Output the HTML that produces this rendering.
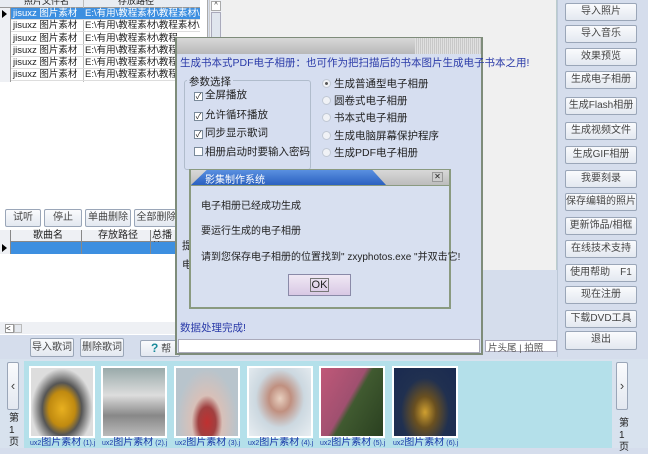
<!DOCTYPE html>
<html><head><meta charset="utf-8"><style>
*{margin:0;padding:0;box-sizing:border-box}
body{width:648px;height:448px;overflow:hidden;background:#d5ddec;font-family:"Liberation Sans","Noto Sans CJK SC",sans-serif;font-size:10px;color:#222;position:relative}
.a{position:absolute}
.btn{position:absolute;background:linear-gradient(#fafbfd,#e3e8f0);border:1px solid #9aa6b8;border-radius:2px;text-align:center;color:#444;font-size:10px}
.rb{left:565px;width:72px;height:18px;line-height:16px}
.row{position:absolute;left:0;width:200px;height:12px;line-height:12px;font-size:9.5px;border-bottom:1px solid #ddd}
.row span{position:absolute;top:0}
.thumb{position:absolute;top:366px;width:66px;height:72px;border:2px solid #fff}
.cap{position:absolute;top:437px;font-size:7px;color:#1a3aa8;white-space:nowrap;width:68px;overflow:hidden;line-height:11px}
.cap b{font-weight:normal;font-size:10px}
.cb{display:inline-block;width:9px;height:9px;border:1px solid #7a8a9a;background:#fff;margin-right:2px;vertical-align:-1px;font-size:8px;line-height:7px;text-align:center}
.rad{display:inline-block;width:9px;height:9px;border-radius:50%;border:1px solid #c0c8d4;background:#f0f2f6;margin-right:3px;vertical-align:-1px}
</style></head><body>
<div class="a" style="left:0;top:0;width:208px;height:205px;background:#fff;border-right:1px solid #aaa"></div>
<div class="a" style="left:0;top:0;width:200px;height:8px;background:#e8ecf2;border-bottom:1px solid #999;font-size:9px;line-height:6px;overflow:hidden"><span class="a" style="left:24px;top:-2px">照片文件名</span><span class="a" style="left:118px;top:-2px">存放路径</span></div>
<div class="a" style="left:83px;top:0;width:1px;height:82px;background:#bbb"></div>
<div class="row" style="top:8px;background:#3d8fe0;color:#fff"><span style="left:13px">jisuxz 图片素材</span><span style="left:85px">E:\有用\教程素材\教程素材\</span></div>
<div class="row" style="top:20px"><span style="left:13px">jisuxz 图片素材</span><span style="left:85px">E:\有用\教程素材\教程素材\</span></div>
<div class="row" style="top:33px"><span style="left:13px">jisuxz 图片素材</span><span style="left:85px">E:\有用\教程素材\教程</span></div>
<div class="row" style="top:45px"><span style="left:13px">jisuxz 图片素材</span><span style="left:85px">E:\有用\教程素材\教程</span></div>
<div class="row" style="top:57px"><span style="left:13px">jisuxz 图片素材</span><span style="left:85px">E:\有用\教程素材\教程</span></div>
<div class="row" style="top:69px"><span style="left:13px">jisuxz 图片素材</span><span style="left:85px">E:\有用\教程素材\教程</span></div>
<div class="a" style="left:0;top:8px;width:11px;height:74px;background:#eef0f4;border-right:1px solid #999"></div>
<div class="a" style="left:2px;top:10px;width:0;height:0;border-left:5px solid #000;border-top:4px solid transparent;border-bottom:4px solid transparent"></div>
<div class="a" style="left:209px;top:0;width:13px;height:205px;background:#eef0f4;border-left:1px solid #ccc"></div>
<div class="a" style="left:211px;top:1px;width:10px;height:10px;background:#fff;border:1px solid #aaa;font-size:7px;text-align:center;line-height:8px">^</div>
<div class="a" style="left:211px;top:12px;width:10px;height:30px;background:#e0e6ee;border:1px solid #aab"></div>
<div class="a" style="left:222px;top:0;width:335px;height:270px;background:#f0f0f0;border-right:1px solid #bcc"></div>
<div class="a" style="left:0;top:205px;width:175px;height:130px;background:#fff"></div>
<div class="btn" style="left:5px;top:209px;width:36px;height:18px;line-height:16px">试听</div>
<div class="btn" style="left:44px;top:209px;width:38px;height:18px;line-height:16px">停止</div>
<div class="btn" style="left:85px;top:209px;width:46px;height:18px;line-height:16px">单曲删除</div>
<div class="btn" style="left:134px;top:209px;width:45px;height:18px;line-height:16px">全部删除</div>
<div class="a" style="left:0;top:230px;width:175px;height:12px;background:#eef0f4;border-bottom:1px solid #888;line-height:12px"><span class="a" style="left:33px">歌曲名</span><span class="a" style="left:98px">存放路径</span><span class="a" style="left:152px">总播放</span></div>
<div class="a" style="left:11px;top:242px;width:164px;height:12px;background:#3d8fe0"></div>
<div class="a" style="left:0;top:230px;width:11px;height:24px;background:#eef0f4;border-right:1px solid #888"></div>
<div class="a" style="left:2px;top:244px;width:0;height:0;border-left:5px solid #000;border-top:4px solid transparent;border-bottom:4px solid transparent"></div>
<div class="a" style="left:81px;top:230px;width:1px;height:24px;background:#888"></div>
<div class="a" style="left:150px;top:230px;width:1px;height:24px;background:#888"></div>
<div class="a" style="left:0;top:322px;width:175px;height:12px;background:#eef0f4"></div>
<div class="a" style="left:5px;top:324px;width:9px;height:9px;border:1px solid #999;background:#fff;font-size:8px;line-height:7px">&lt;</div>
<div class="a" style="left:14px;top:324px;width:8px;height:9px;border:1px solid #bbb;background:#e4e8ee"></div>
<div class="btn" style="left:30px;top:338px;width:44px;height:19px;line-height:17px">导入歌词</div>
<div class="btn" style="left:80px;top:338px;width:44px;height:19px;line-height:17px">删除歌词</div>
<div class="btn" style="left:140px;top:340px;width:40px;height:17px;line-height:15px;text-align:left;padding-left:10px"><b style="color:#1a8a9a;font-size:12px">?</b> 帮</div>
<div class="a" style="left:485px;top:340px;width:72px;height:12px;background:#fff;border:1px solid #aab"></div>
<span class="a" style="left:488px;top:340px;font-size:9.5px;color:#555">片头尾 | 拍照</span>
<div class="a" style="left:557px;top:0;width:87px;height:357px;border-left:1px solid #bcc8d8"></div>
<div class="btn rb" style="top:3px">导入照片</div>
<div class="btn rb" style="top:25px">导入音乐</div>
<div class="btn rb" style="top:48px">效果预览</div>
<div class="btn rb" style="top:71px">生成电子相册</div>
<div class="btn rb" style="top:97px">生成Flash相册</div>
<div class="btn rb" style="top:122px">生成视频文件</div>
<div class="btn rb" style="top:146px">生成GIF相册</div>
<div class="btn rb" style="top:170px">我要刻录</div>
<div class="btn rb" style="top:193px">保存编辑的照片</div>
<div class="btn rb" style="top:217px">更新饰品/相框</div>
<div class="btn rb" style="top:240px">在线技术支持</div>
<div class="btn rb" style="top:264px">使用帮助　F1</div>
<div class="btn rb" style="top:286px">现在注册</div>
<div class="btn rb" style="top:310px">下载DVD工具</div>
<div class="btn rb" style="top:331px;height:19px">退出</div>
<div class="a" style="left:0;top:359px;width:648px;height:89px;background:#d8e2ee"></div>
<div class="a" style="left:24px;top:361px;width:588px;height:87px;background:#b4e0ea"></div>
<div class="btn" style="left:7px;top:362px;width:12px;height:48px;line-height:46px;font-size:13px">‹</div>
<div class="a" style="left:9px;top:413px;font-size:10px;line-height:12px;width:10px">第<br>1<br>页</div>
<div class="btn" style="left:616px;top:362px;width:12px;height:48px;line-height:46px;font-size:13px">›</div>
<div class="a" style="left:619px;top:418px;font-size:10px;line-height:12px;width:10px">第<br>1<br>页</div>
<div class="thumb" style="left:29px;background:radial-gradient(ellipse at 50% 60%,#e8b020 0,#c08a10 30%,#555 45%,#ddd 70%)"></div>
<div class="thumb" style="left:101px;background:linear-gradient(#9aa 0,#ddd 40%,#888 70%,#bbb);"></div>
<div class="thumb" style="left:174px;background:radial-gradient(ellipse at 50% 80%,#c03030 0,#a04040 20%,#d8c0b8 35%,#b8c4cc 70%)"></div>
<div class="thumb" style="left:247px;background:radial-gradient(ellipse at 50% 45%,#e8d0c0 0,#c09080 25%,#ccd8e0 55%,#e8eef2)"></div>
<div class="thumb" style="left:319px;background:linear-gradient(120deg,#c05878 0,#a05070 45%,#405a30 52%,#2a4020)"></div>
<div class="thumb" style="left:392px;background:radial-gradient(ellipse at 50% 65%,#d0a030 0,#6a5020 25%,#203050 55%,#1a2a50)"></div>
<div class="cap" style="left:30px">ux2<b>图片素材</b> (1).j</div>
<div class="cap" style="left:102px">ux2<b>图片素材</b> (2).j</div>
<div class="cap" style="left:175px">ux2<b>图片素材</b> (3).j</div>
<div class="cap" style="left:248px">ux2<b>图片素材</b> (4).j</div>
<div class="cap" style="left:320px">ux2<b>图片素材</b> (5).j</div>
<div class="cap" style="left:393px">ux2<b>图片素材</b> (6).j</div>
<div class="a" style="left:175px;top:37px;width:308px;height:318px;background:#d6def0;border:2px solid #7e8c7a"></div>
<div class="a" style="left:177px;top:38px;width:304px;height:16px;background:linear-gradient(#d8d8d8,#b8b8b8)"></div>
<div class="a" style="left:415px;top:38px;width:66px;height:16px;background:repeating-linear-gradient(90deg,#e0e0e0 0 1px,#c8c8c8 1px 2px)"></div>
<div class="a" style="left:180px;top:55px;color:#2a3aa8;font-size:10.5px;white-space:nowrap">生成书本式PDF电子相册：也可作为把扫描后的书本图片生成电子书本之用!</div>
<div class="a" style="left:184px;top:80px;width:127px;height:90px;border:1px solid #b0bccc;border-radius:3px"></div>
<div class="a" style="left:187px;top:74px;background:#d6def0;padding:0 2px;font-size:10.5px">参数选择</div>
<div class="a" style="left:194px;top:87px;font-size:10.5px"><span class="cb">✓</span>全屏播放</div>
<div class="a" style="left:194px;top:107px;font-size:10.5px"><span class="cb">✓</span>允许循环播放</div>
<div class="a" style="left:194px;top:125px;font-size:10.5px"><span class="cb">✓</span>同步显示歌词</div>
<div class="a" style="left:194px;top:144px;font-size:10.5px"><span class="cb"></span>相册启动时要输入密码</div>
<div class="a" style="left:322px;top:76px;font-size:10.5px"><span class="rad" style="background:radial-gradient(#555 25%,#f0f2f6 35%)"></span>生成普通型电子相册</div>
<div class="a" style="left:322px;top:93px;font-size:10.5px"><span class="rad"></span>圆卷式电子相册</div>
<div class="a" style="left:322px;top:110px;font-size:10.5px"><span class="rad"></span>书本式电子相册</div>
<div class="a" style="left:322px;top:128px;font-size:10.5px"><span class="rad"></span>生成电脑屏幕保护程序</div>
<div class="a" style="left:322px;top:145px;font-size:10.5px"><span class="rad"></span>生成PDF电子相册</div>
<span class="a" style="left:182px;top:238px;font-size:10.5px">提</span>
<span class="a" style="left:182px;top:257px;font-size:10.5px">电</span>
<div class="a" style="left:180px;top:320px;color:#2a3aa8;font-size:10.5px">数据处理完成!</div>
<div class="a" style="left:178px;top:339px;width:302px;height:14px;background:#fff;border:1px solid #aab"></div>
<div class="a" style="left:189px;top:169px;width:262px;height:140px;background:#d8e0f0;border:2px solid #8a9a80"></div>
<div class="a" style="left:191px;top:170px;width:258px;height:15px;background:linear-gradient(#d8d8d8,#bcbcbc)"></div>
<div class="a" style="left:191px;top:170px;width:195px;height:15px;background:linear-gradient(#5a90e0,#2a60c0);clip-path:polygon(8% 0,93% 0,100% 100%,0 100%)"></div>
<span class="a" style="left:205px;top:171px;color:#fff;font-size:10px">影集制作系统</span>
<div class="a" style="left:432px;top:172px;width:11px;height:10px;background:#ccc;border:1px solid #999;font-size:8px;text-align:center;line-height:8px">✕</div>
<div class="a" style="left:191px;top:185px;width:258px;height:1px;background:#8a9a80"></div>
<div class="a" style="left:201px;top:197px;font-size:10px">电子相册已经成功生成</div>
<div class="a" style="left:201px;top:222px;font-size:10px">要运行生成的电子相册</div>
<div class="a" style="left:201px;top:248px;font-size:10px;white-space:nowrap">请到您保存电子相册的位置找到" zxyphotos.exe "并双击它!</div>
<div class="a" style="left:288px;top:274px;width:63px;height:22px;background:linear-gradient(#f0e8f4,#d8c8e4);border:1px solid #8a8aa8;text-align:center;line-height:20px;font-size:11px"><span style="border:1px solid #777;padding:0 1px">OK</span></div>
</body></html>
